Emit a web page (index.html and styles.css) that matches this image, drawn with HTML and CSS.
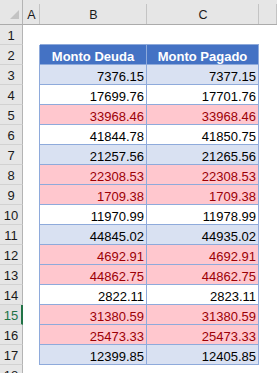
FILE: index.html
```html
<!DOCTYPE html>
<html>
<head>
<meta charset="utf-8">
<link rel="stylesheet" href="styles.css">
</head>
<body>
<div class="sheet">
  <div class="corner"><svg width="23" height="25" viewBox="0 0 23 25"><polygon points="10,19 19,19 19,10" fill="#c3c3c3"/></svg></div>
  <div class="ch">A</div>
  <div class="ch">B</div>
  <div class="ch">C</div>
  <div class="ch"></div>

  <div class="rh">1</div><div class="e"></div><div class="e tt"></div><div class="e tt"></div><div class="e"></div>

  <div class="rh">2</div><div class="e tl"></div><div class="c th">Monto Deuda</div><div class="c th">Monto Pagado</div><div class="e"></div>

  <div class="rh">3</div><div class="e tl"></div><div class="c band">7376.15</div><div class="c band">7377.15</div><div class="e"></div>
  <div class="rh">4</div><div class="e tl"></div><div class="c">17699.76</div><div class="c">17701.76</div><div class="e"></div>
  <div class="rh">5</div><div class="e tl"></div><div class="c bad">33968.46</div><div class="c bad">33968.46</div><div class="e"></div>
  <div class="rh">6</div><div class="e tl"></div><div class="c">41844.78</div><div class="c">41850.75</div><div class="e"></div>
  <div class="rh">7</div><div class="e tl"></div><div class="c band">21257.56</div><div class="c band">21265.56</div><div class="e"></div>
  <div class="rh">8</div><div class="e tl"></div><div class="c bad">22308.53</div><div class="c bad">22308.53</div><div class="e"></div>
  <div class="rh">9</div><div class="e tl"></div><div class="c bad">1709.38</div><div class="c bad">1709.38</div><div class="e"></div>
  <div class="rh">10</div><div class="e tl"></div><div class="c">11970.99</div><div class="c">11978.99</div><div class="e"></div>
  <div class="rh">11</div><div class="e tl"></div><div class="c band">44845.02</div><div class="c band">44935.02</div><div class="e"></div>
  <div class="rh">12</div><div class="e tl"></div><div class="c bad">4692.91</div><div class="c bad">4692.91</div><div class="e"></div>
  <div class="rh">13</div><div class="e tl"></div><div class="c bad">44862.75</div><div class="c bad">44862.75</div><div class="e"></div>
  <div class="rh">14</div><div class="e tl"></div><div class="c">2822.11</div><div class="c">2823.11</div><div class="e"></div>
  <div class="rh sel">15</div><div class="e tl"></div><div class="c bad">31380.59</div><div class="c bad">31380.59</div><div class="e"></div>
  <div class="rh">16</div><div class="e tl"></div><div class="c bad">25473.33</div><div class="c bad">25473.33</div><div class="e"></div>
  <div class="rh">17</div><div class="e tl"></div><div class="c band">12399.85</div><div class="c band">12405.85</div><div class="e"></div>
  <div class="rh">18</div><div class="e"></div><div class="e"></div><div class="e"></div><div class="e"></div>
</div>
</body>
</html>
```
FILE: styles.css
```css
* { box-sizing: border-box; }
html, body { margin: 0; padding: 0; background: #fff; }
body {
  font-family: "Liberation Sans", Arial, sans-serif;
  color: #000;
  width: 277px;
  height: 373px;
  overflow: hidden;
}
.sheet {
  display: grid;
  grid-template-columns: 23px 17px 107px 112px 18px;
  grid-template-rows: 25px repeat(18, 20px);
}
.corner {
  background: #e6e6e6;
  border-right: 1px solid #b4b4b4;
  border-bottom: 1px solid #ababab;
}
.corner svg { display: block; }
.ch {
  background: linear-gradient(#c4c4c4, #c4c4c4) no-repeat right 4px / 1px calc(100% - 4px), #e6e6e6;
  border-bottom: 1px solid #ababab;
  font-size: 12.5px;
  line-height: 12px;
  padding-top: 9px;
  text-align: center;
  color: #1a1a1a;
}
.rh {
  background: #e6e6e6;
  border-right: 1px solid #b4b4b4;
  border-bottom: 1px solid #d2d2d2;
  font-size: 13px;
  line-height: 14px;
  padding-top: 4px;
  text-align: center;
  color: #1a1a1a;
}
.rh.sel {
  color: #217346;
  background: #e1e1e1;
  border-right: 2px solid #217346;
  padding-left: 1px;
}
.e { background: #fff; }
.e.tt { border-bottom: 1px solid #8eaadb; }
.e.tl { border-right: 1px solid #8eaadb; }
.c {
  display: flex;
  justify-content: flex-end;
  align-items: flex-end;
  font-size: 13px;
  line-height: 13px;
  padding: 0 2px 1px 0;
  border-right: 1px solid #8eaadb;
  border-bottom: 1px solid #8eaadb;
  background: #fff;
}
.c.band { background: #d9e1f2; }
.c.bad { background: #ffc7ce; color: #9c0006; }
.c.th {
  background: #4472c4;
  color: #fff;
  font-weight: bold;
  justify-content: center;
  padding: 0 0 1px 0;
}
```
